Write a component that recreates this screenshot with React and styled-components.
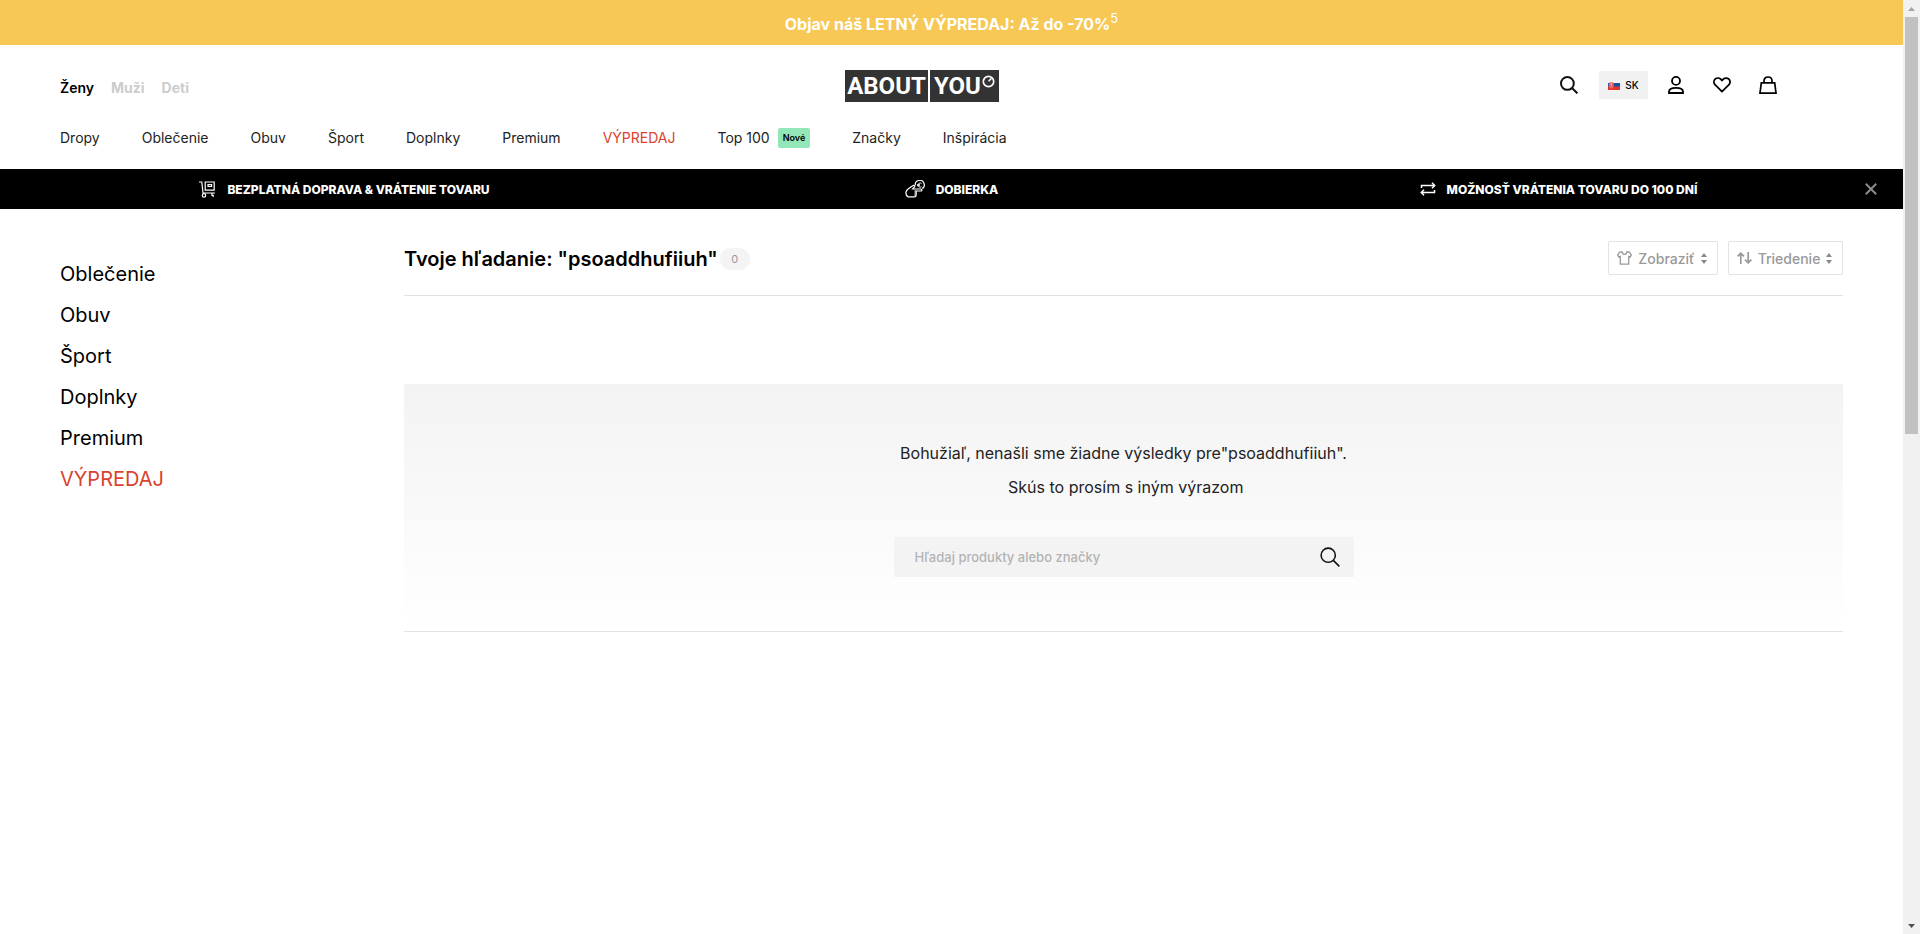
import React from "react";
import styled, { createGlobalStyle } from "styled-components";

const GlobalStyle = createGlobalStyle`
  *, *::before, *::after { box-sizing: border-box; }
  body {
    margin: 0;
    background: #fff;
    color: #000;
    font-family: Inter, "Liberation Sans", sans-serif;
  }
  button { border: 0; padding: 0; background: none; font-family: inherit; cursor: pointer; }
  a { color: inherit; text-decoration: none; }
  svg { display: block; flex: none; }
`;

const Shell = styled.div`
  display: flex;
  height: 100vh;
`;

const Page = styled.div`
  flex: 1;
  min-width: 0;
  overflow: hidden;
`;

/* Window scrollbar */
const ScrollTrack = styled.div`
  flex: none;
  width: 17px;
  display: flex;
  flex-direction: column;
  align-items: center;
  background: #f1f1f1;
`;

const ScrollArrow = styled.div`
  flex: none;
  width: 17px;
  height: 17px;
  display: grid;
  place-items: center;
`;

const ScrollSpace = styled.div`
  flex: 1;
  align-self: stretch;
  padding: 0 2px;
`;

const ScrollThumb = styled.div`
  height: 46.3%;
  background: #c1c1c1;
`;

const SaleBanner = styled.a`
  display: flex;
  align-items: center;
  justify-content: center;
  height: 45px;
  padding-top: 3px;
  background: #f7c856;
  color: #fff;
  font-size: 16px;
  font-weight: 700;
  line-height: 20px;

  sup {
    font-size: 13px;
    font-weight: 400;
    line-height: 12px;
    align-self: flex-start;
    padding-top: 9px;
  }
`;

const Header = styled.header`
  padding: 25px 119px 21px 60px;
`;

const HeaderTop = styled.div`
  display: grid;
  grid-template-columns: 1fr auto 1fr;
  align-items: center;
  height: 32px;
`;

const GenderTabs = styled.nav`
  display: flex;
  gap: 17px;
  padding-top: 4px;
`;

const GenderLink = styled.a`
  color: ${(p) => (p.$active ? "#000" : "#ccc")};
  font-size: 14px;
  font-weight: ${(p) => (p.$active ? 600 : 700)};
  line-height: 20px;
`;

const Logo = styled.a`
  display: flex;
  gap: 2px;
  height: 32px;
`;

const LogoBlock = styled.span`
  display: flex;
  align-items: center;
  justify-content: center;
  gap: 1px;
  width: ${(p) => p.$width}px;
  background: #333;
  color: #fff;
  font-family: Roboto, "Liberation Sans", sans-serif;
  font-size: 24px;
  font-weight: 700;
  line-height: 32px;

  svg { align-self: flex-start; margin-top: 5px; }
`;

const Actions = styled.div`
  display: flex;
  justify-content: flex-end;
  align-items: center;
  gap: 14px;
  height: 28px;
  padding-bottom: 2px;
`;

const IconButton = styled.button`
  width: 32px;
  height: 28px;
  display: grid;
  place-items: center;
`;

const CountryButton = styled.button`
  width: 49px;
  height: 28px;
  margin-right: -2px;
  display: flex;
  align-items: center;
  justify-content: center;
  gap: 5px;
  background: #f1f1f1;
  color: #000;
  font-size: 10px;
  font-weight: 500;
`;

const MainNav = styled.nav`
  display: flex;
  align-items: center;
  gap: 42px;
  height: 20px;
  margin-top: 26px;
`;

const NavLink = styled.a`
  display: flex;
  align-items: center;
  gap: 8px;
  color: ${(p) => (p.$sale ? "#d9432f" : "#222")};
  font-size: 14px;
  line-height: 20px;
  white-space: nowrap;
`;

const NewTag = styled.span`
  padding: 0 5px;
  border-radius: 2px;
  background: #93e6b8;
  color: #000;
  font-size: 9px;
  font-weight: 600;
  line-height: 20px;
`;

const Benefits = styled.section`
  display: grid;
  grid-template-columns: 1fr 1fr 1fr 41px;
  align-items: center;
  height: 40px;
  padding-left: 41px;
  background: #000;
  color: #fff;
`;

const Benefit = styled.div`
  display: flex;
  align-items: center;
  justify-content: center;
  gap: 11px;
  font-size: 12px;
  font-weight: 800;
  line-height: 16px;
  white-space: nowrap;
`;

const BenefitText = styled.span`
  padding-top: 2px;
`;

const CloseButton = styled.button`
  width: 18px;
  height: 18px;
  display: grid;
  place-items: center;
`;

const Body = styled.div`
  display: grid;
  grid-template-columns: 284px 1fr;
  gap: 60px;
  padding: 32px 60px 0;
`;

const Categories = styled.nav`
  display: flex;
  flex-direction: column;
  gap: 17px;
  padding-top: 21px;
`;

const CategoryLink = styled.a`
  color: ${(p) => (p.$sale ? "#d9432f" : "#000")};
  font-size: 20px;
  line-height: 24px;
`;

const ResultsHead = styled.div`
  display: flex;
  justify-content: space-between;
  height: 55px;
  border-bottom: 1px solid #e3e3e3;
`;

const TitleGroup = styled.div`
  display: flex;
  align-items: center;
  gap: 2px;
  height: 36px;
`;

const Title = styled.h1`
  margin: 0;
  font-size: 20px;
  font-weight: 600;
  line-height: 36px;
`;

const Count = styled.span`
  width: 30px;
  height: 22px;
  border-radius: 11px;
  background: #f4f4f4;
  color: #999;
  font-size: 11px;
  line-height: 22px;
  text-align: center;
`;

const Filters = styled.div`
  display: flex;
  gap: 10px;
`;

const FilterButton = styled.button`
  display: flex;
  align-items: center;
  justify-content: space-between;
  width: ${(p) => p.$width}px;
  height: 34px;
  padding: 0 10px 0 8px;
  border: 1px solid #e3e3e3;
  border-radius: 2px;
  color: #999;
  font-size: 14px;
  font-weight: 500;
`;

const EmptyState = styled.section`
  display: flex;
  flex-direction: column;
  align-items: center;
  margin-top: 88px;
  padding: 52px 0 54px;
  border-bottom: 1px solid #e3e3e3;
  background: linear-gradient(#f3f3f3, #fff);
`;

const Message = styled.p`
  margin: 0;
  color: #222;
  font-size: 16px;
  line-height: 34px;
  text-align: center;
`;

const SearchForm = styled.form`
  display: flex;
  align-items: center;
  width: 460px;
  height: 40px;
  margin-top: 33px;
  padding: 0 8px 0 21px;
  background: #f3f3f3;
`;

const SearchInput = styled.input`
  flex: 1;
  min-width: 0;
  height: 40px;
  padding: 0;
  border: 0;
  outline: 0;
  background: transparent;
  color: #222;
  font-family: inherit;
  font-size: 13px;
  font-weight: 500;

  &::placeholder { color: #b3b3b3; opacity: 1; }
`;

const SearchIcon = ({ size = 18, weight = 2 }) => (
  <svg width={size} height={size} viewBox="0 0 18 18" fill="none" stroke="#111" strokeWidth={weight}>
    <circle cx="7.4" cy="7.4" r="6.4" />
    <path d="M12 12l5.4 5.4" />
  </svg>
);

const UserIcon = () => (
  <svg width="16" height="18" viewBox="0 0 16 18" fill="none" stroke="#000" strokeWidth="1.8">
    <circle cx="8" cy="4.9" r="4" />
    <path d="M1 17v-1.2c0-2.4 2.6-4 7-4s7 1.6 7 4V17z" />
  </svg>
);

const HeartIcon = () => (
  <svg width="18" height="16" viewBox="0 0 18 16" fill="none" stroke="#000" strokeWidth="1.8">
    <path d="M9 14.6L2.2 7.9C.5 6.2.6 3.7 2.1 2.2c1.6-1.6 4.1-1.5 5.6 0L9 3.5l1.3-1.3c1.5-1.5 4-1.6 5.6 0 1.5 1.5 1.6 4-.1 5.7z" />
  </svg>
);

const BagIcon = () => (
  <svg width="18" height="18" viewBox="0 0 18 18" fill="none" stroke="#000" strokeWidth="1.7">
    <path d="M2.3 6.9h13.4L17 17.1H1z" />
    <path d="M5 6.9V5c0-2.4 1.7-4 4-4s4 1.6 4 4v1.9" />
  </svg>
);

const FlagIcon = () => (
  <svg width="12" height="9" viewBox="0 0 12 9">
    <path fill="#f6f6f8" d="M0 0h12v9H0z" />
    <path fill="#1c4fa5" d="M0 2h12v4H0z" />
    <path fill="#e0362f" d="M0 5.500h12V9H0z" />
    <path fill="#e8574f" stroke="#f3b5b8" strokeWidth=".4" d="M1.300 1.300h4v3.700c0 1.200-1.200 1.900-2 2.200C2.500 6.900 1.300 6.200 1.300 5z" />
    <path stroke="#fff" strokeWidth=".4" d="M3.300 2.200v3.300M2.300 3.300h2" />
  </svg>
);

const TrolleyIcon = () => (
  <svg width="17" height="17" viewBox="0 0 17 17" fill="none" stroke="#fff" strokeWidth="1.2">
    <path d="M0 1h2.800L4 12h12" />
    <path d="M6.200 1h9v8.200h-9z" />
    <path d="M9 3.700h3.600v1.800H9z" />
    <circle cx="5" cy="14.400" r="1.700" />
    <path d="M13 12v2.400h1.200V16" />
  </svg>
);

const CashIcon = () => (
  <svg width="20" height="18" viewBox="0 0 20 18" fill="none" stroke="#fff" strokeWidth="1.2">
    <path d="M3 16.800c-1.600-1-2.300-2.600-2-4.600.3-1.700 1.400-2.900 3-4L8.200 5.500c1-.6 2 .4 1.300 1.300L7.600 9h8.300c1.400 0 1.400 2 0 2h-4.700v4c0 1-.5 1.800-1.500 1.800z" />
    <path d="M9.400 11h1.800M9.400 13h1.800M9.200 15h1.800" />
    <path d="M10.300 5.400a4.500 4.500 0 1 1 6.900 3.200" />
    <path d="M16.600 3.600a2.100 2.100 0 1 0 0 3M12 4.700h3M12 5.700h3" strokeWidth=".9" />
  </svg>
);

const ReturnIcon = () => (
  <svg width="16" height="14" viewBox="0 0 16 14" fill="none" stroke="#fff" strokeWidth="1.5">
    <path d="M1.500 6V3.500h13M12 .8l2.700 2.700L12 6.200" />
    <path d="M14.500 8v2.500h-13M4 7.800L1.300 10.500 4 13.200" />
  </svg>
);

const CloseIcon = () => (
  <svg width="12" height="12" viewBox="0 0 12 12" stroke="#8c8c8c" strokeWidth="2">
    <path d="M.8.8l10.400 10.400M11.200.8L.8 11.200" />
  </svg>
);

const ShirtIcon = () => (
  <svg width="15" height="14" viewBox="0 0 15 14" fill="none" stroke="#999" strokeWidth="1.300">
    <path d="M5 .8L2.600 1.200.7 4.200l1 1.700 1.600-.5v7.800h8.400V5.400l1.600.5 1-1.700-1.900-3L10 .8C9.600 2.400 8.800 3.400 7.500 3.400S5.400 2.400 5 .8z" />
  </svg>
);

const SortIcon = () => (
  <svg width="15" height="12" viewBox="0 0 15 12" fill="none" stroke="#999" strokeWidth="1.700">
    <path d="M3.800 12V1M.6 4.400L3.800 1.200 7 4.400M11.200 0v11M8 7.600l3.200 3.200 3.200-3.200" />
  </svg>
);

const UpDownIcon = () => (
  <svg width="6" height="11" viewBox="0 0 6 11" fill="#888">
    <path d="M3 0l3 4H0zM3 11L0 7h6z" />
  </svg>
);

const LogoRing = () => (
  <svg width="13" height="13" viewBox="0 0 13 13" fill="none" stroke="#fff" strokeWidth="1.700">
    <circle cx="6.500" cy="6.500" r="5.200" />
    <path d="M6.600 6.200l2.800-2.800" strokeWidth="1.500" />
  </svg>
);

const Arrow = ({ down }) => (
  <svg width="7" height="4" viewBox="0 0 7 4" fill={down ? "#505050" : "#a3a3a3"}>
    <path d={down ? "M0 0h7L3.500 4z" : "M0 4h7L3.500 0z"} />
  </svg>
);

const categories = ["Oblečenie", "Obuv", "Šport", "Doplnky", "Premium", "VÝPREDAJ"];
const navItems = ["Dropy", ...categories, "Top 100", "Značky", "Inšpirácia"];

const benefits = [
  { icon: <TrolleyIcon />, text: "BEZPLATNÁ DOPRAVA & VRÁTENIE TOVARU" },
  { icon: <CashIcon />, text: "DOBIERKA" },
  { icon: <ReturnIcon />, text: "MOŽNOSŤ VRÁTENIA TOVARU DO 100 DNÍ" },
];

export default function App() {
  return (
    <Shell>
      <GlobalStyle />
      <Page>
        <SaleBanner href="#vypredaj">
          Objav náš LETNÝ VÝPREDAJ: Až do -70%<sup>5</sup>
        </SaleBanner>

        <Header>
          <HeaderTop>
            <GenderTabs aria-label="Oddelenie">
              <GenderLink href="#zeny" $active>Ženy</GenderLink>
              <GenderLink href="#muzi">Muži</GenderLink>
              <GenderLink href="#deti">Deti</GenderLink>
            </GenderTabs>
            <Logo href="#domov">
              <LogoBlock $width={83}>ABOUT</LogoBlock>
              <LogoBlock $width={69}>YOU<LogoRing /></LogoBlock>
            </Logo>
            <Actions>
              <IconButton aria-label="Hľadať"><SearchIcon /></IconButton>
              <CountryButton><FlagIcon />SK</CountryButton>
              <IconButton aria-label="Účet"><UserIcon /></IconButton>
              <IconButton aria-label="Obľúbené"><HeartIcon /></IconButton>
              <IconButton aria-label="Košík"><BagIcon /></IconButton>
            </Actions>
          </HeaderTop>
          <MainNav aria-label="Hlavné menu">
            {navItems.map((item) => (
              <NavLink key={item} href="#kategoria" $sale={item === "VÝPREDAJ"}>
                {item}
                {item === "Top 100" && <NewTag>Nové</NewTag>}
              </NavLink>
            ))}
          </MainNav>
        </Header>

        <Benefits>
          {benefits.map((b) => (
            <Benefit key={b.text}>{b.icon}<BenefitText>{b.text}</BenefitText></Benefit>
          ))}
          <CloseButton aria-label="Zavrieť"><CloseIcon /></CloseButton>
        </Benefits>

        <Body>
          <Categories aria-label="Kategórie">
            {categories.map((item) => (
              <CategoryLink key={item} href="#kategoria" $sale={item === "VÝPREDAJ"}>{item}</CategoryLink>
            ))}
          </Categories>

          <main>
            <ResultsHead>
              <TitleGroup>
                <Title>Tvoje hľadanie: "psoaddhufiiuh"</Title>
                <Count>0</Count>
              </TitleGroup>
              <Filters>
                <FilterButton $width={110} aria-haspopup="listbox"><ShirtIcon />Zobraziť<UpDownIcon /></FilterButton>
                <FilterButton $width={115} aria-haspopup="listbox"><SortIcon />Triedenie<UpDownIcon /></FilterButton>
              </Filters>
            </ResultsHead>

            <EmptyState>
              <Message>Bohužiaľ, nenašli sme žiadne výsledky pre"psoaddhufiiuh".</Message>
              <Message>&nbsp;Skús to prosím s iným výrazom</Message>
              <SearchForm role="search">
                <SearchInput aria-label="Hľadaj produkty alebo značky" placeholder="Hľadaj produkty alebo značky" />
                <IconButton type="button" aria-label="Hľadať"><SearchIcon size={20} weight={1.4} /></IconButton>
              </SearchForm>
            </EmptyState>
          </main>
        </Body>
      </Page>

      <ScrollTrack aria-hidden="true">
        <ScrollArrow><Arrow /></ScrollArrow>
        <ScrollSpace><ScrollThumb /></ScrollSpace>
        <ScrollArrow><Arrow down /></ScrollArrow>
      </ScrollTrack>
    </Shell>
  );
}
